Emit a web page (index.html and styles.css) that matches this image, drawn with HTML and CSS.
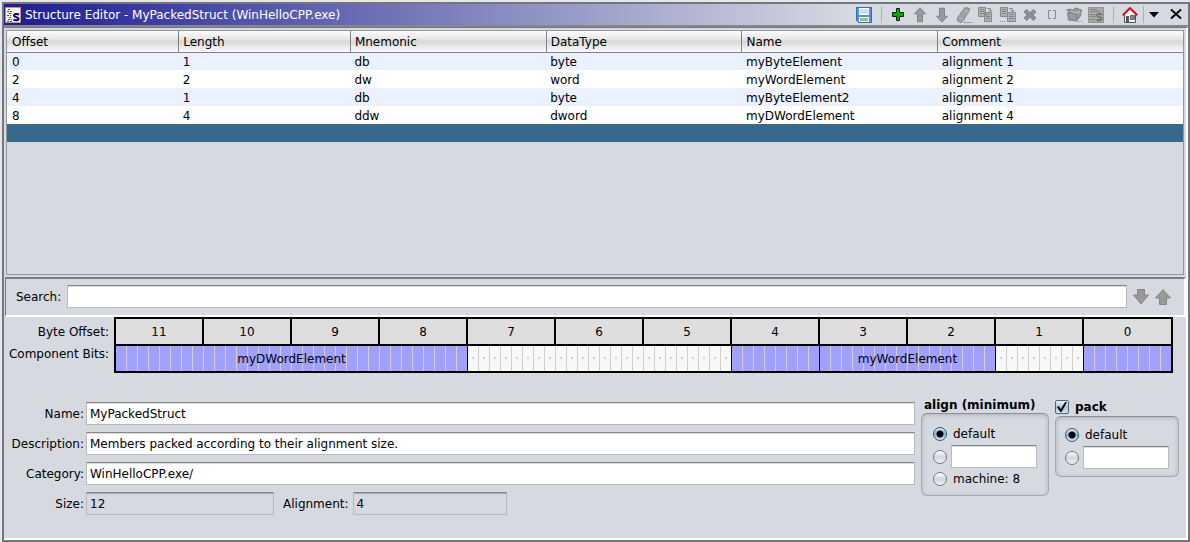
FILE: index.html
```html
<!DOCTYPE html>
<html lang="en">
<head>
<meta charset="utf-8">
<title>Structure Editor</title>
<link rel="stylesheet" href="styles.css">
</head>
<body>
<main class="window">
  <header class="titlebar">
    <div class="title">
      <svg class="icon" viewBox="0 0 16 16"><path fill="#f4efe8" stroke="#c8946c" d="M.5.5h15v15H.5z"/><path stroke="#555" stroke-dasharray="2 1" d="M3 2.500h3M2 4.500h5M4 6.500h3M2 8.500h4M4 10.500h3M3 12.500h4M2 14.500h5"/><path fill="none" stroke="#000070" stroke-width="2" d="M14 7.500c-2-1-5-.8-5 .9 0 2.200 4.500 1.200 4.500 3.400 0 1.700-3 1.900-5 .9"/></svg>
      <h1 class="title-text">Structure Editor - MyPackedStruct (WinHelloCPP.exe)</h1>
    </div>
    <div class="tools">
      <button class="tool" aria-label="Save"><svg class="icon" viewBox="0 0 16 16"><path fill="#5c90dc" stroke="#3468b8" d="M.5.5h15v15H2.500l-2-2z"/><path fill="#eef6ff" d="M3 1h10v7H3z"/><path stroke="#a9c8ee" d="M4 3.500h8M4 5.500h8"/><path fill="#f4f8f0" d="M3 10h10v5H3z"/><path fill="#8fc878" d="M4 11h8v3H4z"/></svg></button>
      <span class="divider"></span>
      <button class="tool" aria-label="Add"><svg class="icon" viewBox="0 0 16 16"><path fill="#00a800" stroke="#002800" d="M6.500 1.500h3v4h4v4h-4v4h-3v-4h-4v-4h4z"/></svg></button>
      <button class="tool" aria-label="Move up"><svg class="icon" viewBox="0 0 16 16"><path fill="#999" stroke="#858585" d="M8 .8l5.500 6h-3v8h-5v-8h-3z"/></svg></button>
      <button class="tool" aria-label="Move down"><svg class="icon" viewBox="0 0 16 16"><path fill="#999" stroke="#858585" d="M8 15.200l5.500-6h-3v-8h-5v8h-3z"/></svg></button>
      <button class="tool" aria-label="Clear"><svg class="icon" viewBox="0 0 16 16"><path fill="#a0a0a0" stroke="#8a8a8a" d="M8 1.500L10 .5l3.500 1v2L7 14l-2 1.500-3.500-1.500v-3z"/><path stroke="#bbb" d="M8 3l4 2M3 10l4 2"/><path stroke="#888" stroke-dasharray="2 1" d="M8 15.500h8"/></svg></button>
      <button class="tool" aria-label="Duplicate"><svg class="icon" viewBox="0 0 16 16"><path fill="#b0b0b0" stroke="#8b8b8b" d="M.5.5h7v9h-7zM6.500 5.500h7v9h-7z"/><path stroke="#858585" d="M2 2.500h4M2 4.500h4M2 6.500h4M8 7.500h4M8 9.500h4M8 11.500h4"/><path fill="none" stroke="#888" d="M9 1.500h3.500V4M10.500 3l2 2 2-2"/></svg></button>
      <button class="tool" aria-label="Duplicate multiple"><svg class="icon" viewBox="0 0 16 16"><path fill="#b0b0b0" stroke="#8b8b8b" d="M.5.5h7v9h-7zM7.500 5.500h8v9h-8z"/><path stroke="#858585" d="M2 2.500h4M2 4.500h4M2 6.500h4M9 7.500h5M9 9.500h5M9 11.500h5"/><path fill="none" stroke="#888" d="M9 1.500h3.500V4M10.500 3l2 2 2-2"/><path stroke="#888" stroke-dasharray="1 1" d="M0 14.500h6"/></svg></button>
      <button class="tool" aria-label="Delete"><svg class="icon" viewBox="0 0 16 16"><path fill="#8f8f8f" stroke="#858585" d="M5 2.500L8 6l3-3.500L14 5l-3 3 3 3-3 2.500L8 10l-3 3.500L2 11l3-3-3-3z"/></svg></button>
      <button class="tool" aria-label="Array"><svg class="icon" viewBox="0 0 16 16"><path fill="none" stroke="#888" d="M7 3.500H4.500v8H7M9 3.500h2.500v8H9"/></svg></button>
      <button class="tool" aria-label="Unpackage"><svg class="icon" viewBox="0 0 16 16"><path fill="#999" stroke="#808080" d="M1.500 6l2-2-3-1 4-1 2 1 3-2 6 2-1 6-4 5-8-1z"/><path fill="none" stroke="#c0c0c0" d="M4 7l7 1 3-4M5 4l5 2 3-2"/><path fill="none" stroke="#777" d="M11 8v5M2 6l9 1.500"/><path stroke="#999" stroke-dasharray="1 1" d="M11 14.500h5"/></svg></button>
      <button class="tool" aria-label="Edit field"><svg class="icon" viewBox="0 0 16 16"><path fill="#a8a8a8" stroke="#929292" d="M.5.5h15v15H.5z"/><path stroke="#858585" d="M2 2.500h7M2 4.500h10M2 7.500h5M2 9.500h6M2 12.500h5"/><path fill="none" stroke="#747474" stroke-width="2" d="M14 7.500c-2-1-5-.8-5 .9 0 2.200 4.500 1.200 4.500 3.400 0 1.700-3 1.900-5 .9"/></svg></button>
      <span class="divider"></span>
      <button class="tool" aria-label="Home"><svg class="icon" viewBox="0 0 16 16"><path fill="#f2f2f2" stroke="#555" d="M2.500 7L8 2l5.500 5v8.500h-11z"/><path fill="#555" d="M4 9h3v6H4z"/><path fill="#7090b8" stroke="#666" d="M8.500 8.500h4v4h-4z"/><path fill="none" stroke="#df1420" stroke-width="2" d="M.7 8.300L8 1l7.300 7.300"/></svg></button>
      <span class="divider divider-tight"></span>
      <button class="tool" aria-label="Menu"><svg class="icon" viewBox="0 0 16 16"><path d="M3 5h10l-5 5.500z"/></svg></button>
      <button class="tool" aria-label="Close"><svg class="icon" viewBox="0 0 16 16"><path fill="none" stroke="#000" stroke-width="2" d="M3 2.500l10 9M13 2.500l-10 9"/></svg></button>
    </div>
  </header>

  <div class="content">
    <div class="table-pane">
      <table class="members">
        <colgroup><col class="col-offset"><col class="col-length"><col class="col-mid"><col class="col-mid"><col class="col-mid"><col></colgroup>
        <thead><tr><th>Offset</th><th>Length</th><th>Mnemonic</th><th>DataType</th><th>Name</th><th>Comment</th></tr></thead>
        <tbody>
          <tr><td>0</td><td>1</td><td>db</td><td>byte</td><td>myByteElement</td><td>alignment 1</td></tr>
          <tr><td>2</td><td>2</td><td>dw</td><td>word</td><td>myWordElement</td><td>alignment 2</td></tr>
          <tr><td>4</td><td>1</td><td>db</td><td>byte</td><td>myByteElement2</td><td>alignment 1</td></tr>
          <tr><td>8</td><td>4</td><td>ddw</td><td>dword</td><td>myDWordElement</td><td>alignment 4</td></tr>
          <tr class="selected"><td></td><td></td><td></td><td></td><td></td><td></td></tr>
        </tbody>
      </table>
    </div>

    <div class="search">
      <label for="search">Search:</label>
      <input class="field search-field" id="search" type="text">
      <button class="tool" aria-label="Search down"><svg class="icon" viewBox="0 0 16 16"><path fill="#999" stroke="#858585" d="M4.500.5h7V6h4L8 15 .5 6h4z"/></svg></button>
      <button class="tool" aria-label="Search up"><svg class="icon" viewBox="0 0 16 16"><path fill="#999" stroke="#858585" d="M4.500 15.500h7V9h4L8 .5.5 9h4z"/></svg></button>
    </div>

    <div class="layout">
      <div class="layout-labels"><span>Byte Offset:</span><span>Component Bits:</span></div>
      <div class="bytes">
        <div class="byte-row">
          <span class="byte">11</span><span class="byte">10</span><span class="byte">9</span><span class="byte">8</span><span class="byte">7</span><span class="byte">6</span><span class="byte">5</span><span class="byte">4</span><span class="byte">3</span><span class="byte">2</span><span class="byte">1</span><span class="byte">0</span>
        </div>
        <div class="bit-row">
          <span class="bits used span-4">myDWordElement</span>
          <span class="bits free span-3"></span>
          <span class="bits used span-1"></span>
          <span class="bits used span-2">myWordElement</span>
          <span class="bits free span-1"></span>
          <span class="bits used span-1"></span>
        </div>
      </div>
    </div>

    <form class="details">
      <div class="info">
        <label for="name">Name:</label><input class="field" id="name" type="text" value="MyPackedStruct">
        <label for="description">Description:</label><input class="field" id="description" type="text" value="Members packed according to their alignment size.">
        <label for="category">Category:</label><input class="field" id="category" type="text" value="WinHelloCPP.exe/">
        <label for="size">Size:</label>
        <div class="sizes">
          <input class="field readonly size-field" id="size" type="text" value="12" readonly>
          <label for="alignment">Alignment:</label>
          <input class="field readonly alignment-field" id="alignment" type="text" value="4" readonly>
        </div>
      </div>
      <div class="group align-group" role="group" aria-labelledby="align-title">
        <div class="group-title" id="align-title">align (minimum)</div>
        <div class="group-box">
          <div class="option"><input class="radio" type="radio" name="align" id="align-default" checked><label for="align-default">default</label></div>
          <div class="option"><input class="radio" type="radio" name="align" aria-label="Explicit alignment"><input class="field value-field" type="text" aria-label="Alignment value"></div>
          <div class="option"><input class="radio" type="radio" name="align" id="align-machine"><label for="align-machine">machine: 8</label></div>
        </div>
      </div>
      <div class="group pack-group">
        <div class="group-title"><input class="check" type="checkbox" id="pack" checked><label for="pack">pack</label></div>
        <div class="group-box">
          <div class="option"><input class="radio" type="radio" name="pack" id="pack-default" checked><label for="pack-default">default</label></div>
          <div class="option"><input class="radio" type="radio" name="pack" aria-label="Explicit packing"><input class="field value-field" type="text" aria-label="Packing value"></div>
        </div>
      </div>
    </form>
  </div>
</main>
</body>
</html>
```
FILE: styles.css
```css
* { box-sizing: border-box; }
body {
  margin: 0;
  padding: 2px 0 0 2px;
  min-height: 100vh;
  display: flex;
  background: #e6e7ec;
  color: #000;
  font: 12px/16px "DejaVu Sans", sans-serif;
}
input, button { font: inherit; color: inherit; }
.window {
  flex: 1;
  display: flex;
  flex-direction: column;
  border: 2px solid #75767c;
  background: #d6d9e0;
}
.titlebar {
  display: flex;
  height: 23px;
  border-bottom: 2px solid #85878e;
}
.title {
  flex: 1;
  display: flex;
  align-items: center;
  gap: 4px;
  padding-left: 1px;
  background: linear-gradient(to right, #1c1c94, #d6d9e0);
}
.title-text { margin: 0; font-size: 12px; font-weight: normal; color: #fff; }
.tools { display: flex; align-items: center; gap: 6px; padding: 0 4px 0 6px; }
.tool { display: block; width: 16px; height: 16px; padding: 0; border: 0; background: none; }
.icon { display: block; width: 16px; height: 16px; }
.divider { width: 1px; height: 17px; margin: 0 2px 0 3px; background: #a9afba; }
.divider-tight { margin: 0 -4px 0 -1px; }

.content {
  flex: 1;
  display: flex;
  flex-direction: column;
  border: solid;
  border-width: 1px 2px 2px 0;
  border-color: #75767c #fff #fff;
}
.table-pane {
  flex: 1;
  margin: 2px;
  border: 1px solid #9297a1;
}
.members { width: 100%; border-collapse: collapse; table-layout: fixed; }
.col-offset, .col-length { width: 14.6%; }
.col-mid { width: 16.65%; }
.members th {
  height: 21px;
  padding: 1px 0 0 4px;
  border-right: 1px solid #7f8186;
  border-bottom: 1px solid #7f8186;
  background: linear-gradient(#fbfbfb, #e9e9e9 35%, #d8d8d8 50%, #fbfbfb);
  text-align: left;
  font-weight: normal;
}
.members th:last-child { border-right: 0; }
.members td { height: 18px; padding: 1px 0 0 4px; background: #fff; }
.members th:first-child, .members td:first-child { padding-left: 5px; }
.members tr:nth-child(odd) td { background: #ebf1ff; }
.members .selected:nth-child(odd) td { background: #39698a; }

.field {
  min-width: 0;
  width: 100%;
  height: 23px;
  padding: 0 3px;
  border: 1px solid #b8bac0;
  border-top-color: #84868a;
  border-radius: 0;
  background: #fff;
  box-shadow: inset 0 1px 0 #dcdcd8;
  outline: 0;
}
.readonly { background: #d6d9e0; box-shadow: inset 0 1px 0 #a8aab0; }

.search {
  display: flex;
  align-items: center;
  gap: 6px;
  height: 40px;
  margin-left: 1px;
  padding: 0 13px 1px 10px;
  border: solid;
  border-width: 2px 2px 2px 1px;
  border-color: #7b7d84 #fff #fff #75767c;
}
.search-field { flex: 1; }

.layout { display: flex; padding-right: 13px; }
.layout-labels {
  display: flex;
  flex-direction: column;
  gap: 6px;
  width: 110px;
  padding: 7px 5px 0 0;
  text-align: right;
}
.bytes { flex: 1; border: solid #000; border-width: 2px 2px 2px 1px; }
.byte-row, .bit-row { display: grid; grid-template-columns: repeat(12, minmax(0, 1fr)); }
.byte-row { border-bottom: 2px solid #000; background: #dedede; }
.byte {
  height: 25px;
  border: solid #000;
  border-width: 0 1px;
  line-height: 26px;
  text-align: center;
}
.byte:last-child { border-right: 0; }
.bits {
  height: 25px;
  border-left: 1px solid #000;
  line-height: 26px;
  text-align: center;
  background-origin: border-box;
  background-size: var(--bit) 100%;
}
.span-1 { --bit: calc(100% / 8); }
.span-2 { --bit: calc(100% / 16); grid-column: span 2; }
.span-3 { --bit: calc(100% / 24); grid-column: span 3; }
.span-4 { --bit: calc(100% / 32); grid-column: span 4; }
.used {
  background-color: #a0a0ff;
  background-image: linear-gradient(to right, #d0d0d0 1px, transparent 1px);
}
.free {
  background-color: #f8f8f8;
  background-image:
    linear-gradient(to right, #d0d0d0 1px, transparent 1px),
    radial-gradient(circle at 6px 12px, #d0d0d0 1px, transparent 1px);
}

.details { display: flex; align-items: flex-start; gap: 6px; padding: 24px 7px 23px 5px; }
.info {
  flex: 1;
  display: grid;
  grid-template-columns: 75px 1fr;
  gap: 7px 2px;
  align-items: center;
  padding-top: 5px;
  text-align: right;
}
.sizes { display: flex; align-items: center; }
.size-field { width: 188px; margin-right: 9px; }
.alignment-field { width: 154px; margin-left: 4px; }

.align-group { width: 128px; }
.pack-group { width: 124px; padding-top: 1px; }
.group-title { display: flex; align-items: center; gap: 6px; font-weight: bold; }
.align-group .group-title { padding-left: 3px; }
.pack-group .group-title { height: 18px; }
.group-box {
  display: grid;
  gap: 1px;
  border: 1px solid #a6a8ae;
  border-top-color: #8c8e94;
  border-radius: 6px;
  box-shadow: inset 0 1px 4px #b0b2b8;
  background: #d6d9e0;
}
.align-group .group-box { padding: 10px 11px 6px; }
.pack-group .group-box { padding: 8px 9px 7px; }
.option { display: flex; align-items: center; gap: 4px; min-height: 20px; }
.option label { padding-left: 2px; }
.value-field { width: 86px; }
.radio {
  appearance: none;
  flex: none;
  width: 14px;
  height: 14px;
  margin: 0;
  border: 1px solid #777a80;
  border-radius: 50%;
  background: linear-gradient(#fff, #d2d5da 50%, #f4f4f4);
}
.radio:checked {
  border-color: #3c5a78;
  background: radial-gradient(circle, #000 3px, transparent 4px), linear-gradient(#d8e6f2, #8fb2cf 50%, #d0e4f4);
}
.check {
  appearance: none;
  display: grid;
  place-items: center;
  width: 14px;
  height: 14px;
  margin: 0;
  border: 1px solid #4c6580;
  border-radius: 2px;
  background: linear-gradient(#eaf1f8, #a9c3d8 50%, #d4e6f4);
}
.check:checked::before {
  content: "";
  width: 10px;
  height: 10px;
  background: #000;
  clip-path: polygon(0 50%, 18% 42%, 38% 70%, 82% 0, 100% 0, 46% 100%, 32% 100%);
}
```
